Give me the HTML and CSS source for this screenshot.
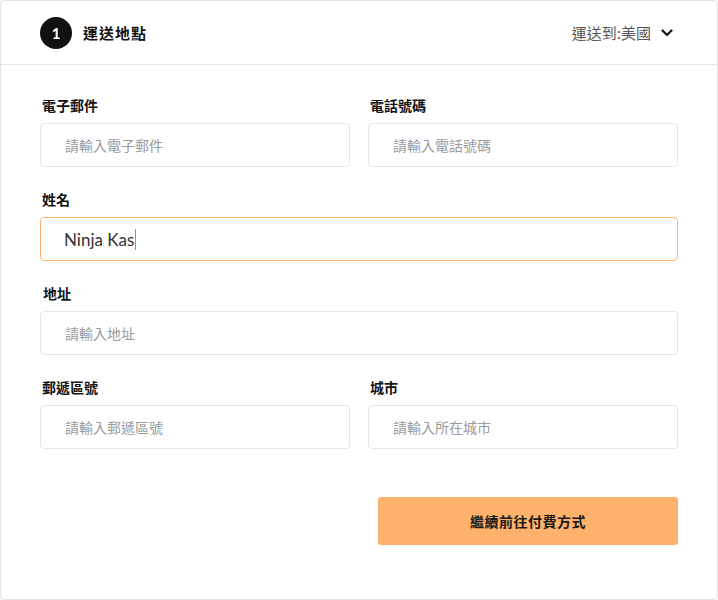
FILE: index.html
```html
<!DOCTYPE html>
<html lang="zh-Hant">
<head>
<meta charset="utf-8">
<link rel="stylesheet" href="styles.css">
</head>
<body>
<div class="card">
  <div class="header">
    <div class="step">
      <span class="num">1</span>
      <span class="title">運送地點</span>
    </div>
    <div class="ship">
      <span>運送到:美國</span>
      <svg class="chev" width="12" height="8" viewBox="0 0 12 8"><path d="M1.5 1.5 L6 6 L10.5 1.5" fill="none" stroke="#111" stroke-width="2.2" stroke-linecap="round" stroke-linejoin="round"/></svg>
    </div>
  </div>
  <div class="body">
    <div class="row two">
      <div class="field">
        <label class="lbl">電子郵件</label>
        <div class="input ph">請輸入電子郵件</div>
      </div>
      <div class="field">
        <label class="lbl">電話號碼</label>
        <div class="input ph">請輸入電話號碼</div>
      </div>
    </div>
    <div class="row">
      <div class="field">
        <label class="lbl">姓名</label>
        <div class="input focus">Ninja Kas<span class="caret"></span></div>
      </div>
    </div>
    <div class="row">
      <div class="field">
        <label class="lbl lbl-addr">地址</label>
        <div class="input ph">請輸入地址</div>
      </div>
    </div>
    <div class="row two">
      <div class="field">
        <label class="lbl">郵遞區號</label>
        <div class="input ph">請輸入郵遞區號</div>
      </div>
      <div class="field">
        <label class="lbl">城市</label>
        <div class="input ph">請輸入所在城市</div>
      </div>
    </div>
    <div class="actions">
      <button class="btn">繼續前往付費方式</button>
    </div>
  </div>
</div>
</body>
</html>
```
FILE: styles.css
```css
* { box-sizing: border-box; }
html, body { margin: 0; padding: 0; background: #fff; }
body {
  font-family: "Lato", "Noto Sans CJK TC", sans-serif;
  color: #111;
}
.card {
  width: 718px;
  height: 600px;
  border: 1px solid #e3e3e3;
  border-radius: 4px;
  background: #fff;
}
.header {
  height: 64px;
  border-bottom: 1px solid #e6e6e6;
  display: flex;
  align-items: center;
  justify-content: space-between;
  padding: 0 40px 0 39px;
}
.step { display: flex; align-items: center; gap: 11px; }
.num {
  width: 32px; height: 32px;
  border-radius: 50%;
  background: #111;
  color: #fff;
  display: flex; align-items: center; justify-content: center;
  font-family: "Lato", sans-serif;
  font-weight: 700;
  font-size: 15px;
}
.title {
  font-family: "Noto Sans CJK TC", sans-serif;
  font-weight: 700;
  font-size: 15px;
  letter-spacing: 1px;
}
.ship {
  display: flex; align-items: center; gap: 10px;
  font-family: "Noto Sans CJK TC", sans-serif;
  font-size: 15px;
  color: #555;
  margin-right: 4px;
}
.chev { display: block; }
.body { padding: 30px 39px 0 39px; }
.row { display: flex; gap: 18px; margin-bottom: 22px; }
.row .field { flex: 1; }
.lbl {
  display: block;
  font-family: "Noto Sans CJK TC", sans-serif;
  font-weight: 700;
  font-size: 14px;
  line-height: 20px;
  margin: 0 0 8px 2px;
  color: #111;
}
.lbl-addr { margin-left: 3px; }
.input {
  height: 44px;
  border: 1px solid #e6e6e6;
  border-radius: 4px;
  display: flex; align-items: center;
  padding-left: 24px;
  font-size: 14px;
}
.input.ph {
  font-family: "Noto Sans CJK TC", sans-serif;
  color: #9a9a9a;
}
.input.focus {
  border-color: #ffb46e;
  font-family: "Lato", sans-serif;
  font-size: 17px;
  color: #333;
  padding-left: 23px;
}
.caret {
  display: inline-block;
  width: 1px; height: 21px;
  background: #e07a3a;
  margin-left: 1px;
}
.actions { display: flex; justify-content: flex-end; padding-top: 26px; }
.btn {
  width: 300px; height: 48px;
  border: none; border-radius: 3px;
  background: #ffb26b;
  font-family: "Noto Sans CJK TC", sans-serif;
  font-weight: 700;
  font-size: 14px;
  color: #1a1a1a;
  letter-spacing: 0.5px;
}
```
